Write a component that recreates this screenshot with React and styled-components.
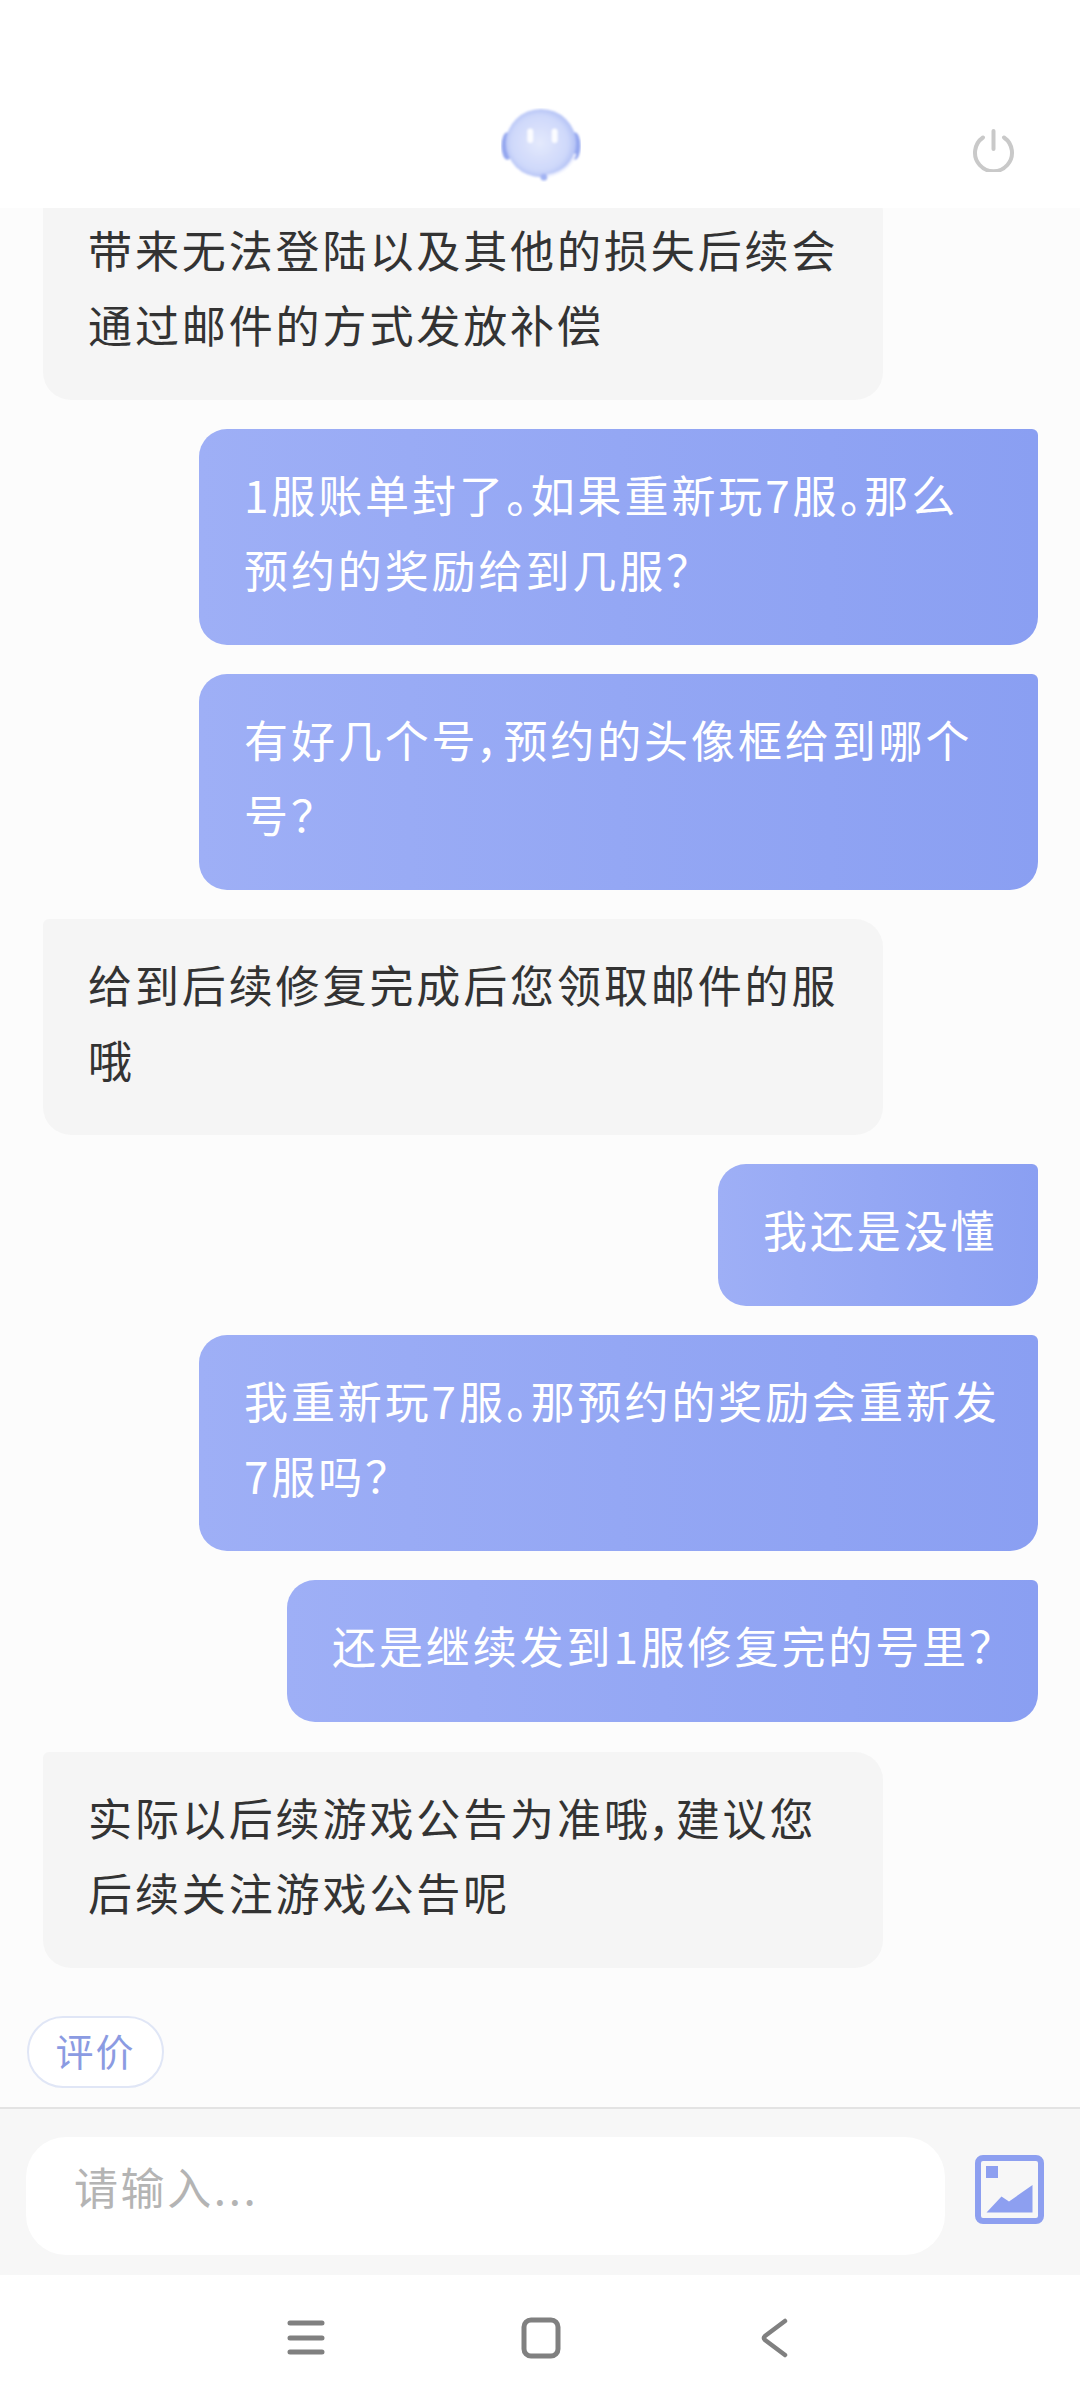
import React from 'react';
import styled, { createGlobalStyle } from 'styled-components';

const GlobalStyle = createGlobalStyle`
  html, body {
    margin: 0;
    padding: 0;
    background: #fff;
  }
  * {
    box-sizing: border-box;
  }
`;

const fontStack = '"Noto Sans CJK SC", "Noto Sans", sans-serif';

const Screen = styled.div`
  width: 1080px;
  height: 2400px;
  display: flex;
  flex-direction: column;
  overflow: hidden;
  font-family: ${fontStack};
  background: #fff;
`;

const Header = styled.header`
  height: 208px;
  flex: none;
  display: grid;
  grid-template-columns: 1fr auto 1fr;
  align-items: start;
  padding: 108px 64px 0 66px;
  background: #fff;
`;

const Avatar = styled.svg`
  grid-column: 2;
  width: 80px;
  height: 74px;
  display: block;
`;

const PowerIcon = styled.svg`
  justify-self: end;
  width: 44px;
  height: 44px;
  margin-top: 20px;
`;

const Chat = styled.main`
  flex: 1;
  min-height: 0;
  display: flex;
  flex-direction: column;
  justify-content: flex-end;
  overflow: hidden;
  padding: 0 42px 19px 43px;
  background: #fcfcfc;
`;

const Thread = styled.div`
  flex: none;
  display: flex;
  flex-direction: column;
  gap: 29px;
`;

const Bubble = styled.div`
  max-width: 841px;
  min-height: 142px;
  padding: 28px 20px 38px 45px;
  font-size: 44px;
  line-height: 75px;
  letter-spacing: 2.9px;
  font-feature-settings: "palt";
  white-space: pre-line;
  flex: none;
  &:last-child {
    margin-top: 1px;
  }
  ${(p) =>
    p.$mine
      ? `
    align-self: flex-end;
    color: #fff;
    background: linear-gradient(90deg, #9eaff6 0%, #8a9ff2 100%);
    border-radius: 28px 6px 28px 28px;
  `
      : `
    align-self: flex-start;
    color: #333;
    background: #f5f5f5;
    border-radius: 6px 28px 28px 28px;
  `}
  ${(p) => p.$width && `width: ${p.$width}px;`}
`;

const RateButton = styled.button`
  align-self: flex-start;
  flex: none;
  width: 137px;
  height: 72px;
  margin: 48px 0 0 -16px;
  padding: 0 0 6px;
  border: 2px solid #e0e6f6;
  border-radius: 36px;
  background: #fff;
  color: #8b9be2;
  font-family: ${fontStack};
  font-size: 38px;
  letter-spacing: 2px;
`;

const InputBar = styled.div`
  height: 168px;
  flex: none;
  display: flex;
  align-items: flex-start;
  gap: 30px;
  padding: 28px 36px 0 26px;
  border-top: 2px solid #e3e3e3;
  background: #f7f7f7;
`;

const InputBox = styled.div`
  width: 919px;
  height: 118px;
  display: flex;
  align-items: center;
  padding: 0 0 20px 48px;
  border-radius: 40px;
  background: #fff;
  color: #b4b4b4;
  font-size: 44px;
  letter-spacing: 2.6px;
`;

const ImageIcon = styled.svg`
  width: 69px;
  height: 69px;
  margin-top: 18px;
  flex: none;
`;

const NavBar = styled.nav`
  flex: none;
  height: 125px;
  display: flex;
  justify-content: center;
  align-items: center;
  gap: 194.5px;
  padding: 0 0 0 1px;
  background: #fff;
`;

const NavIcon = styled.svg`
  width: 40px;
  height: 44px;
  fill: none;
  stroke: #808080;
  stroke-linecap: round;
  stroke-linejoin: round;
`;

const messages = [
  { id: 1, text: '带来无法登陆以及其他的损失后续会\n通过邮件的方式发放补偿', width: 840 },
  { id: 2, mine: true, text: '1服账单封了。如果重新玩7服。那么\n预约的奖励给到几服？', width: 839 },
  { id: 3, mine: true, text: '有好几个号，预约的头像框给到哪个\n号？', width: 839 },
  { id: 4, text: '给到后续修复完成后您领取邮件的服\n哦', width: 840 },
  { id: 5, mine: true, text: '我还是没懂', width: 320 },
  { id: 6, mine: true, text: '我重新玩7服。那预约的奖励会重新发\n7服吗？', width: 839 },
  { id: 7, mine: true, text: '还是继续发到1服修复完的号里？', width: 751 },
  { id: 8, text: '实际以后续游戏公告为准哦，建议您\n后续关注游戏公告呢', width: 840 },
];

function RobotAvatar() {
  return (
    <Avatar viewBox="0 0 82 74" aria-hidden="true">
      <defs>
        <radialGradient id="head" cx="48%" cy="50%" r="56%">
          <stop offset="0%" stopColor="#e4e9fd" />
          <stop offset="72%" stopColor="#ced8fa" />
          <stop offset="100%" stopColor="#a9b9f4" />
        </radialGradient>
        <filter id="soft">
          <feGaussianBlur stdDeviation="1" />
        </filter>
      </defs>
      <g filter="url(#soft)">
        <ellipse cx="6.5" cy="38" rx="6" ry="14" fill="#94a7ef" />
        <ellipse cx="75.5" cy="38" rx="6" ry="14" fill="#94a7ef" />
        <ellipse cx="41" cy="35" rx="36" ry="35" fill="url(#head)" />
        <path d="M76 46 C72 60 58 68 45 69" fill="none" stroke="#eef1fe" strokeWidth="2.5" />
        <circle cx="44" cy="70" r="3.5" fill="#a3b4f3" />
        <rect x="27" y="20" width="6" height="15" rx="3" fill="#fbfcff" />
        <rect x="52" y="20" width="6" height="15" rx="3" fill="#fbfcff" />
      </g>
    </Avatar>
  );
}

function PowerButton() {
  return (
    <PowerIcon viewBox="0 0 44 44" fill="none" stroke="#c9c9c9" strokeWidth="4" strokeLinecap="round" aria-hidden="true">
      <path d="M21.5 3 V21" />
      <path d="M11 9.5 A18.5 18.5 0 1 0 32 9.5" />
    </PowerIcon>
  );
}

function PictureButton() {
  return (
    <ImageIcon viewBox="0 0 69 69" aria-hidden="true">
      <rect x="3" y="3" width="63" height="63" rx="5" fill="none" stroke="#8d9ff0" strokeWidth="6" />
      <rect x="11" y="11" width="12" height="12" fill="#8d9ff0" />
      <path d="M11.5 57.5 L26.5 41.5 L34 46.5 L57.5 30 V57.5 Z" fill="#8d9ff0" />
    </ImageIcon>
  );
}

export default function App() {
  return (
    <>
      <GlobalStyle />
      <Screen>
        <Header>
          <RobotAvatar />
          <PowerButton />
        </Header>
        <Chat>
          <Thread>
            {messages.map((m) => (
              <Bubble key={m.id} $mine={m.mine} $width={m.width}>
                {m.text}
              </Bubble>
            ))}
          </Thread>
          <RateButton type="button">评价</RateButton>
        </Chat>
        <InputBar>
          <InputBox>请输入...</InputBox>
          <PictureButton />
        </InputBar>
        <NavBar>
          <NavIcon viewBox="0 0 40 44" strokeWidth="5">
            <path d="M4 7 H36 M4 22 H36 M4 36 H36" />
          </NavIcon>
          <NavIcon viewBox="0 0 40 44" strokeWidth="5">
            <rect x="3" y="4" width="34" height="36" rx="7" />
          </NavIcon>
          <NavIcon viewBox="0 0 40 44" strokeWidth="4.5">
            <path d="M30 5 L10 20 Q8 22 10 24 L30 39" />
          </NavIcon>
        </NavBar>
      </Screen>
    </>
  );
}
